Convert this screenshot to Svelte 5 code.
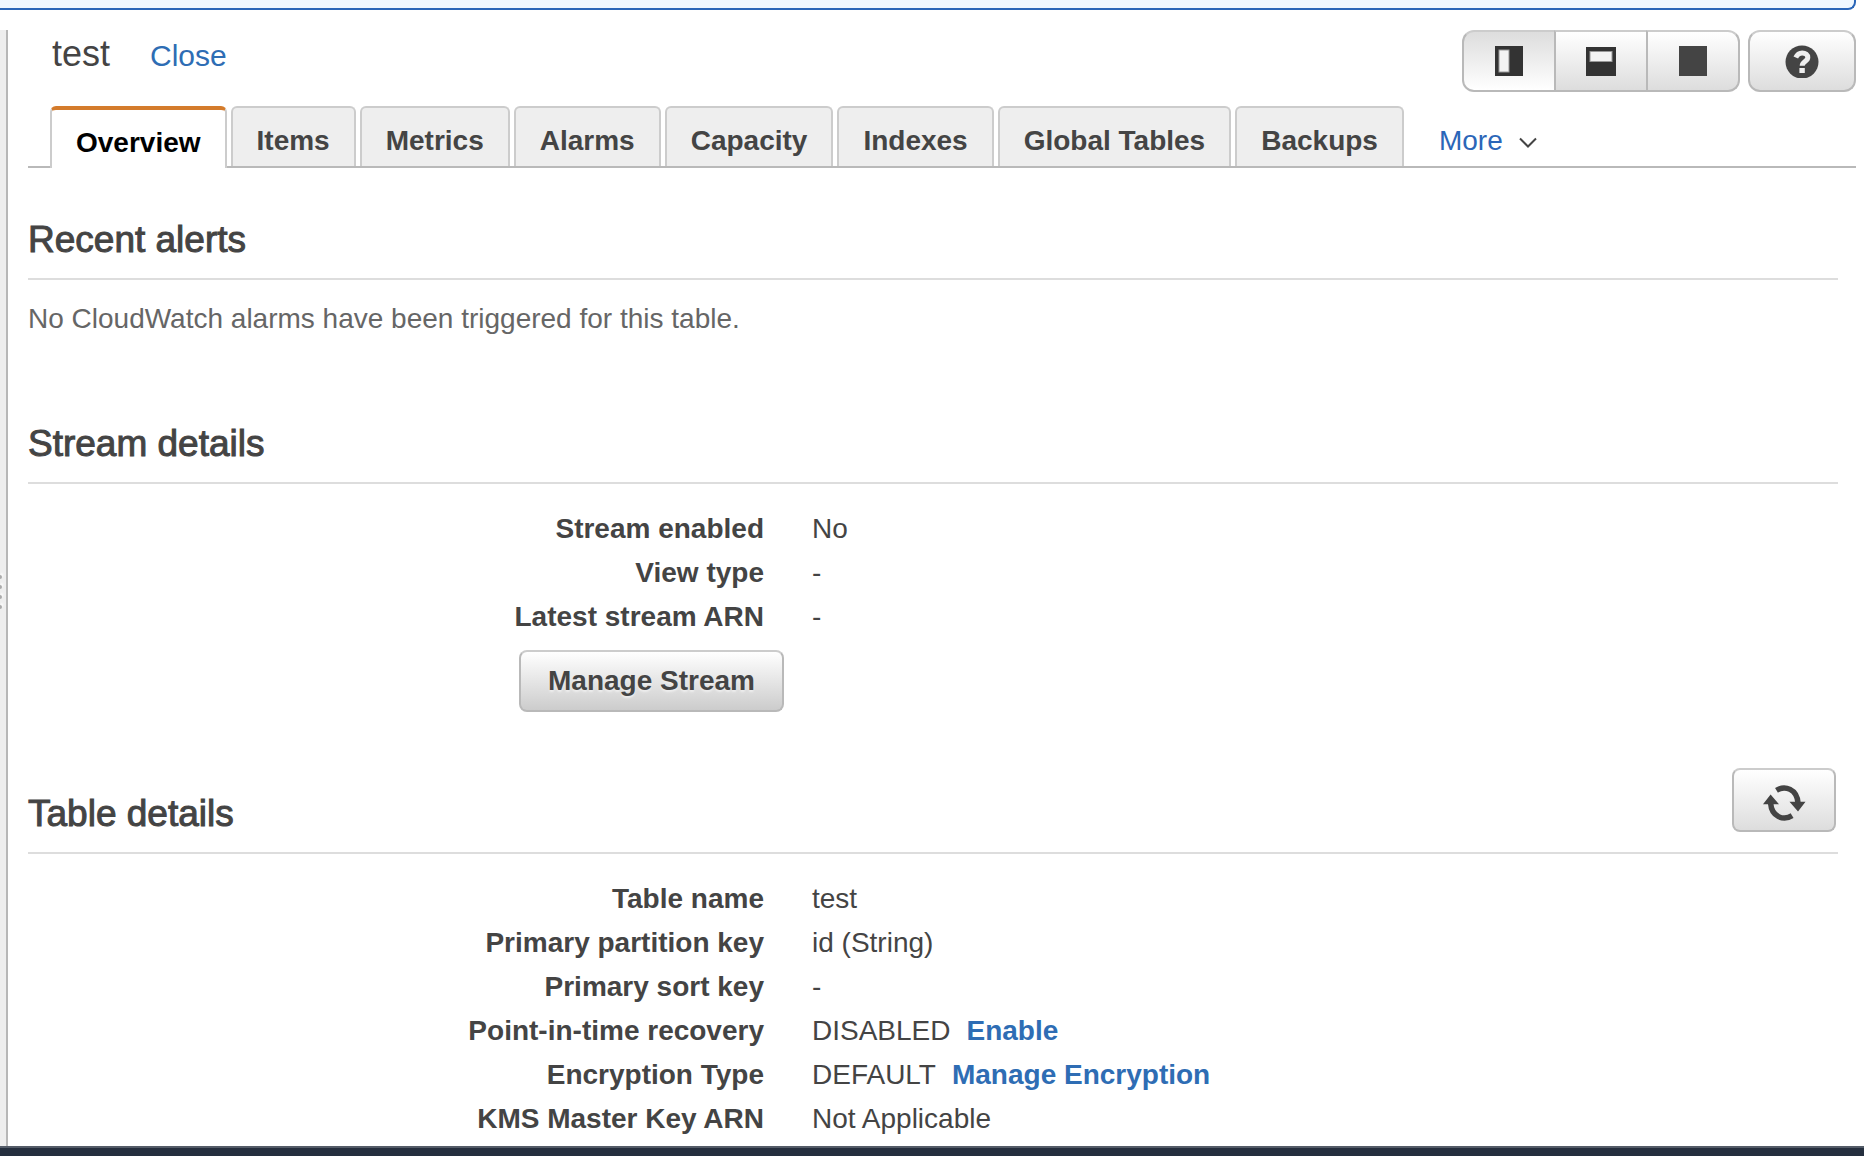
<script>
  const tabs = ['Overview', 'Items', 'Metrics', 'Alarms', 'Capacity', 'Indexes', 'Global Tables', 'Backups'];
  let active = $state('Overview');
  let layout = $state('side');

  const stream = [
    { label: 'Stream enabled', value: 'No' },
    { label: 'View type', value: '-' },
    { label: 'Latest stream ARN', value: '-' }
  ];
  const table = [
    { label: 'Table name', value: 'test' },
    { label: 'Primary partition key', value: 'id (String)' },
    { label: 'Primary sort key', value: '-' },
    { label: 'Point-in-time recovery', value: 'DISABLED', action: 'Enable' },
    { label: 'Encryption Type', value: 'DEFAULT', action: 'Manage Encryption' },
    { label: 'KMS Master Key ARN', value: 'Not Applicable' }
  ];
</script>

{#snippet rows(items)}
  {#each items as item}
    <dt>{item.label}</dt>
    <dd>
      <span>{item.value}</span>
      {#if item.action}<a href="#{item.action}">{item.action}</a>{/if}
    </dd>
  {/each}
{/snippet}

<div class="page">
  <div class="banner"></div>

  <div class="workspace">
    <div class="splitter">
      <i></i><i></i><i></i><i></i>
    </div>

    <main>
      <header>
        <h1>test</h1>
        <a class="close" href="#close">Close</a>
        <div class="tools">
          <div class="segments">
            <button type="button" aria-label="Side layout" class:pressed={layout === 'side'} onclick={() => (layout = 'side')}>
              <svg width="28" height="30" viewBox="0 0 28 30">
                <rect width="28" height="30" fill="#333" />
                <rect x="4" y="4" width="10" height="22" fill="#f3f3f3" stroke="#999" stroke-width="1" />
              </svg>
            </button>
            <button type="button" aria-label="Stacked layout" class:pressed={layout === 'stacked'} onclick={() => (layout = 'stacked')}>
              <svg width="30" height="30" viewBox="0 0 30 30">
                <rect y="1" width="30" height="29" fill="#333" />
                <rect x="4" y="5.5" width="22" height="10" fill="#f3f3f3" stroke="#999" stroke-width="1" />
              </svg>
            </button>
            <button type="button" aria-label="Full layout" class:pressed={layout === 'full'} onclick={() => (layout = 'full')}>
              <svg width="28" height="30" viewBox="0 0 28 30"><rect width="28" height="30" fill="#444" /></svg>
            </button>
          </div>
          <button type="button" class="help" aria-label="Help">
            <svg width="34" height="34" viewBox="0 0 34 34">
              <circle cx="17" cy="18" r="16.5" fill="#444" />
              <path d="M10.8 13.6C12.2 10.4 14.2 9 17.2 9c3.4 0 5.6 1.8 5.6 4.5 0 4-5.6 4.1-5.6 8.2" fill="none" stroke="#eee" stroke-width="5" />
              <rect x="14.4" y="24" width="5.4" height="5" fill="#eee" />
            </svg>
          </button>
        </div>
      </header>

      <nav>
        <div class="tablist" role="tablist">
          {#each tabs as tab}
            <button type="button" role="tab" aria-selected={active === tab} class:active={active === tab} onclick={() => (active = tab)}>{tab}</button>
          {/each}
        </div>
        <button type="button" class="more">
          More
          <svg width="18" height="12" viewBox="0 0 18 12">
            <path d="M1 1.5l8 8 8-8" fill="none" stroke="#444" stroke-width="2" />
          </svg>
        </button>
      </nav>

      <div class="content">
        <section>
          <div class="heading"><h2>Recent alerts</h2></div>
          <p>No CloudWatch alarms have been triggered for this table.</p>
        </section>

        <section>
          <div class="heading"><h2>Stream details</h2></div>
          <dl>{@render rows(stream)}</dl>
          <div class="actions">
            <button type="button" class="manage">Manage Stream</button>
          </div>
        </section>

        <section>
          <div class="heading">
            <h2>Table details</h2>
            <button type="button" class="refresh" aria-label="Refresh">
              <svg width="44" height="40" viewBox="0 0 44 40">
                <g fill="none" stroke="#444" stroke-width="5.5">
                  <path d="M14.5 7.3C23 2 35 6 36 20" />
                  <path d="M30.1 32.7C21.6 38 9.6 34 8.6 20" />
                </g>
                <path d="M27.5 18.7h16L36 28.5zM17 21.3H1l7.6-9.8z" fill="#444" />
              </svg>
            </button>
          </div>
          <dl>{@render rows(table)}</dl>
        </section>
      </div>
    </main>
  </div>

  <footer></footer>
</div>

<style>
  :global(body) {
    margin: 0;
    background: #fff;
  }
  .page {
    display: flex;
    flex-direction: column;
    min-height: 100vh;
    font: 28px/44px "Liberation Sans", Arial, sans-serif;
    color: #444;
  }
  button {
    margin: 0;
    padding: 0;
    font: inherit;
    color: inherit;
    cursor: pointer;
    box-sizing: border-box;
  }
  svg {
    display: block;
  }
  a {
    color: #2e6db4;
    text-decoration: none;
  }
  h1, h2, p, dl, dd {
    margin: 0;
  }

  .banner {
    height: 8px;
    margin-right: 8px;
    background: #f0f8ff;
    border: solid #2b66b8;
    border-width: 0 2px 2px 0;
    border-radius: 0 0 8px 0;
  }
  .workspace {
    display: flex;
    flex: 1;
    margin-top: 20px;
  }
  .splitter {
    display: flex;
    flex-direction: column;
    justify-content: center;
    gap: 6px;
    width: 6px;
    padding-top: 8px;
    background: #eee;
    border-right: 2px solid #b7b7b7;
  }
  .splitter i {
    width: 2px;
    height: 4px;
    border-radius: 0 2px 2px 0;
    background: #aaa;
    box-shadow: 1px -2px 2px #fff;
  }
  main {
    flex: 1;
    min-width: 0;
    padding: 0 8px 5px 20px;
  }

  header {
    display: flex;
    align-items: baseline;
    height: 62px;
    margin-bottom: 14px;
    padding-left: 24px;
  }
  h1 {
    font-size: 36px;
    line-height: 48px;
    font-weight: 400;
  }
  .close {
    margin-left: 40px;
    font-size: 30px;
  }
  .tools {
    display: flex;
    align-self: stretch;
    gap: 8px;
    margin-left: auto;
  }
  .segments {
    display: flex;
  }
  .tools button {
    display: grid;
    place-items: center;
    height: 62px;
    border: 2px solid #b9b9b9;
    border-top-color: #ccc;
    background: linear-gradient(#fff, #ddd);
  }
  .segments button {
    width: 94px;
  }
  .segments button + button {
    margin-left: -2px;
  }
  .segments button:first-child {
    border-radius: 12px 0 0 12px;
  }
  .segments button:last-child {
    border-radius: 0 12px 12px 0;
  }
  .tools button.pressed {
    background: linear-gradient(#ddd, #fff);
  }
  .tools .help {
    width: 108px;
    border-radius: 12px;
  }

  nav {
    display: flex;
    height: 60px;
    padding-left: 22px;
    border-bottom: 2px solid #b9b9b9;
  }
  .tablist {
    display: flex;
    align-items: flex-start;
    gap: 4px;
  }
  .tablist button {
    padding: 17px 24px 9px;
    border: 2px solid #ccc;
    border-bottom: 0;
    border-radius: 6px 6px 0 0;
    background: #eee;
    font-weight: 700;
    line-height: 32px;
    white-space: nowrap;
  }
  .tablist button.active {
    border-top: 4px solid #d47b2b;
    background: #fff;
    color: #000;
  }
  .more {
    display: flex;
    align-items: center;
    gap: 16px;
    height: 32px;
    margin: 19px 0 0 35px;
    border: 0;
    background: none;
    color: #2b66b8;
  }
  .more svg {
    margin-top: 4px;
  }

  .content {
    padding: 50px 18px 0 0;
  }
  section + section {
    margin-top: 80px;
  }
  .heading {
    display: flex;
    justify-content: space-between;
    height: 60px;
    border-bottom: 2px solid #ddd;
  }
  h2 {
    font-size: 37px;
    line-height: 44px;
    font-weight: 400;
    -webkit-text-stroke: 1px #444;
  }
  p {
    margin-top: 14px;
    line-height: 48px;
    padding-top: 1px;
    margin-bottom: -1px;
    color: #666;
  }
  dl, .actions {
    display: grid;
    grid-template-columns: minmax(0, 756fr) minmax(0, 1054fr);
  }
  dl {
    margin-top: 23px;
  }
  dt {
    padding-right: 20px;
    font-weight: 700;
    text-align: right;
  }
  dd {
    display: flex;
    gap: 16px;
    padding-left: 28px;
  }
  dd a {
    font-weight: 700;
  }
  .actions {
    margin-top: 11px;
  }
  .manage {
    justify-self: end;
    height: 62px;
    padding: 0 27px;
    border: 2px solid #b9b9b9;
    border-top-color: #ccc;
    border-radius: 8px;
    background: linear-gradient(#fff, #ccc);
    font-weight: 700;
    text-shadow: 0 2px 2px #eee;
  }
  .refresh {
    display: grid;
    place-items: center;
    width: 104px;
    height: 64px;
    margin: -24px 2px 0 0;
    border: 2px solid #b9b9b9;
    border-top-color: #ccc;
    border-radius: 8px;
    background: linear-gradient(#fff, #ddd);
  }
  .refresh svg {
    margin-top: 6px;
  }

  footer {
    height: 8px;
    border-top: 2px solid #545c68;
    background: #252f3e;
  }
</style>
